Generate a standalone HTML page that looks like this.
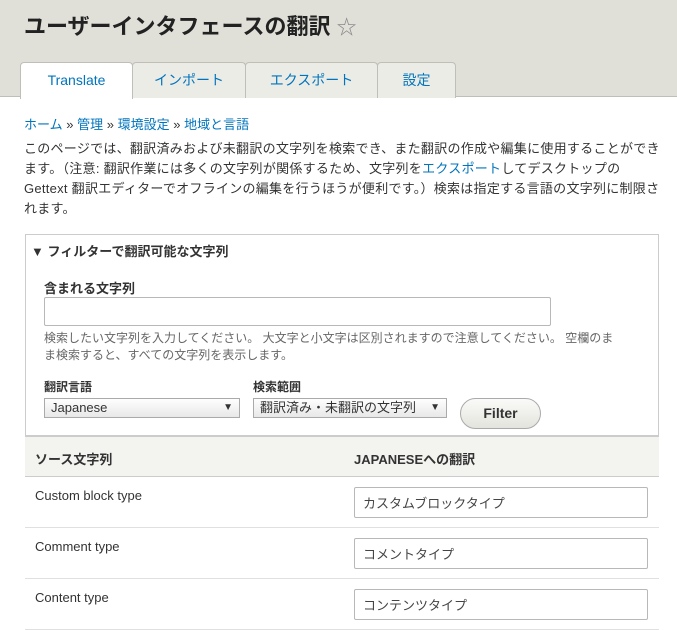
<!DOCTYPE html>
<html><head><meta charset="utf-8"><style>
*{box-sizing:border-box;margin:0;padding:0}
body{width:677px;height:630px;overflow:hidden;background:#fff;font-family:"Liberation Sans","Noto Sans CJK JP",sans-serif;color:#333;font-size:13px;position:relative}
.hd{position:absolute;left:0;top:0;width:677px;height:97px;background:#e0dfd8;border-bottom:1px solid #bfbfba}
.t{position:absolute;left:24px;top:9px;font-size:22px;font-weight:bold;color:#222}
.t span{font-weight:normal;color:#888;font-size:20px}
.tab{position:absolute;top:62px;height:36px;background:#ecece7;border:1px solid #bfbfba;border-bottom:none;border-radius:4px 4px 0 0;color:#0074bd;font-size:14px;text-align:center;line-height:35px}
.p{position:absolute;left:24px;top:139px;width:655px;line-height:20px;font-size:13px;white-space:nowrap;letter-spacing:0.27px}
.fs{position:absolute;left:25px;top:234px;width:634px;height:202px;border:1px solid #ccc}
.abs{position:absolute}
.in{position:absolute;border:1px solid #b8b8b8;border-radius:2px;background:#fff}
.sel{position:absolute;border:1px solid #aaa;background:linear-gradient(#fefefe,#e8e8e8);font-size:13px;padding-left:6px;line-height:18px}
.sel:after{content:"▼";position:absolute;right:6px;top:0;font-size:10px}
.th{position:absolute;left:25px;top:435px;width:634px;height:42px;background:#f3f3ef;border-top:2px solid #ccc;border-bottom:1px solid #ccc;font-weight:bold;font-size:13px}
.row{position:absolute;left:25px;width:634px;height:51px;border-bottom:1px solid #e0e0e0}
.row .s{position:absolute;left:10px;top:11px;font-size:13px}
.row .ta{position:absolute;left:329px;top:10px;width:294px;height:31px;border:1px solid #b8b8b8;border-radius:2px;font-size:13px;padding:5px 8px;color:#444}
</style></head><body>
<div class="hd"><div class="t">ユーザーインタフェースの翻訳 <span>☆</span></div>
<div class="tab" style="left:20px;width:113px;background:#fff;height:37px">Translate</div>
<div class="tab" style="left:132px;width:114px">インポート</div>
<div class="tab" style="left:245px;width:133px">エクスポート</div>
<div class="tab" style="left:377px;width:79px">設定</div>
</div>
<div class="abs" style="left:24px;top:114px"><span style="color:#0074bd">ホーム</span> » <span style="color:#0074bd">管理</span> » <span style="color:#0074bd">環境設定</span> » <span style="color:#0074bd">地域と言語</span></div>
<div class="p">このページでは、翻訳済みおよび未翻訳の文字列を検索でき、また翻訳の作成や編集に使用することができ<br>ます。（注意: 翻訳作業には多くの文字列が関係するため、文字列を<span style="color:#0074bd">エクスポート</span>してデスクトップの<br>Gettext 翻訳エディターでオフラインの編集を行うほうが便利です。）検索は指定する言語の文字列に制限さ<br>れます。</div>
<div class="fs">
<div class="abs" style="left:5px;top:6px;font-weight:bold">▼ フィルターで翻訳可能な文字列</div>
<div class="abs" style="left:18px;top:43px;font-weight:bold">含まれる文字列</div>
<div class="in" style="left:18px;top:62px;width:507px;height:29px"></div>
<div class="abs" style="left:18px;top:95px;width:610px;font-size:12px;color:#666;line-height:17px;white-space:nowrap">検索したい文字列を入力してください。 大文字と小文字は区別されますので注意してください。 空欄のま<br>ま検索すると、すべての文字列を表示します。</div>
<div class="abs" style="left:18px;top:143px;font-weight:bold;font-size:12px">翻訳言語</div>
<div class="sel" style="left:18px;top:163px;width:196px;height:20px">Japanese</div>
<div class="abs" style="left:227px;top:143px;font-weight:bold;font-size:12px">検索範囲</div>
<div class="sel" style="left:227px;top:163px;width:194px;height:20px;overflow:hidden;white-space:nowrap">翻訳済み・未翻訳の文字列</div>
<div class="abs" style="left:434px;top:163px;width:81px;height:31px;border:1px solid #aaa;border-radius:16px;background:linear-gradient(#fafaf8,#e4e4de);font-weight:bold;font-size:14px;text-align:center;line-height:29px">Filter</div>
</div>
<div class="th"><span class="abs" style="left:10px;top:12px">ソース文字列</span><span class="abs" style="left:329px;top:12px">JAPANESEへの翻訳</span></div>
<div class="row" style="top:477px"><span class="s">Custom block type</span><div class="ta">カスタムブロックタイプ</div></div>
<div class="row" style="top:528px"><span class="s">Comment type</span><div class="ta">コメントタイプ</div></div>
<div class="row" style="top:579px"><span class="s">Content type</span><div class="ta">コンテンツタイプ</div></div>
</body></html>
